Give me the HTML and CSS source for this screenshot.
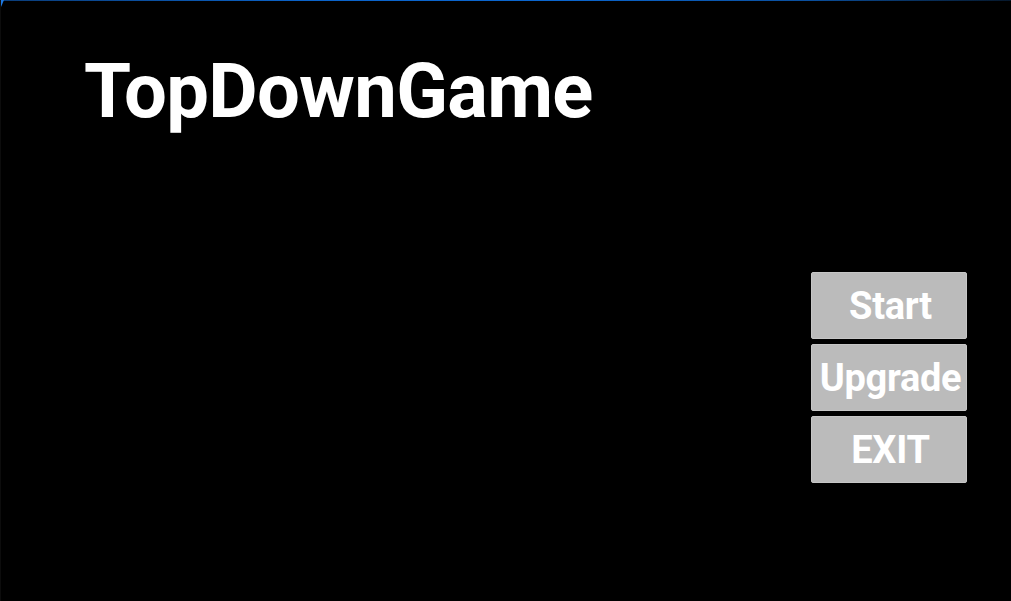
FILE: index.html
```html
<!DOCTYPE html>
<html lang="en">
<head>
<meta charset="utf-8">
<title>TopDownGame</title>
<link rel="stylesheet" href="styles.css">
</head>
<body>
<div class="screen">
  <div class="topline"></div>
  <div class="corner"></div>
  <h1 class="title">TopDownGame</h1>
  <div class="menu">
    <button class="btn">Start</button>
    <button class="btn">Upgrade</button>
    <button class="btn">EXIT</button>
  </div>
</div>
</body>
</html>
```

FILE: styles.css
```css
html, body {
  margin: 0;
  padding: 0;
  background: #000;
  height: 100%;
  overflow: hidden;
}
.screen {
  position: relative;
  width: 1011px;
  height: 601px;
  background: #000;
  border-left: 1px solid #0c0c0c;
  box-sizing: border-box;
  display: flex;
  flex-direction: column;
  font-family: Roboto, "Liberation Sans", sans-serif;
}
.topline {
  position: absolute;
  left: 0;
  top: 0;
  right: 0;
  height: 1px;
  background: linear-gradient(90deg, #0a3d7a 0%, #0b63c9 30%, #0b66cf 55%, #0a4f9e 80%, #06182c 100%);
}
.corner {
  position: absolute;
  left: 0;
  top: 0;
  width: 0;
  height: 0;
  border-top: 7px solid #1e78e0;
  border-right: 3px solid transparent;
}
.title {
  margin: 46px 0 0 83px;
  font-size: 76px;
  font-weight: 700;
  color: #fff;
  line-height: 90px;
  letter-spacing: -0.7px;
}
.menu {
  margin: 136px 44px 0 0;
  align-self: flex-end;
  display: flex;
  flex-direction: column;
  gap: 5px;
}
.btn {
  width: 156px;
  height: 67px;
  background: #bbbbbb;
  border: 1px solid #c6c6c6;
  border-radius: 2px;
  color: #fff;
  font-family: Roboto, "Liberation Sans", sans-serif;
  font-weight: 700;
  font-size: 38px;
  letter-spacing: -0.3px;
  padding: 0 0 0 3px;
  display: flex;
  align-items: center;
  justify-content: center;
  box-sizing: border-box;
}
```
